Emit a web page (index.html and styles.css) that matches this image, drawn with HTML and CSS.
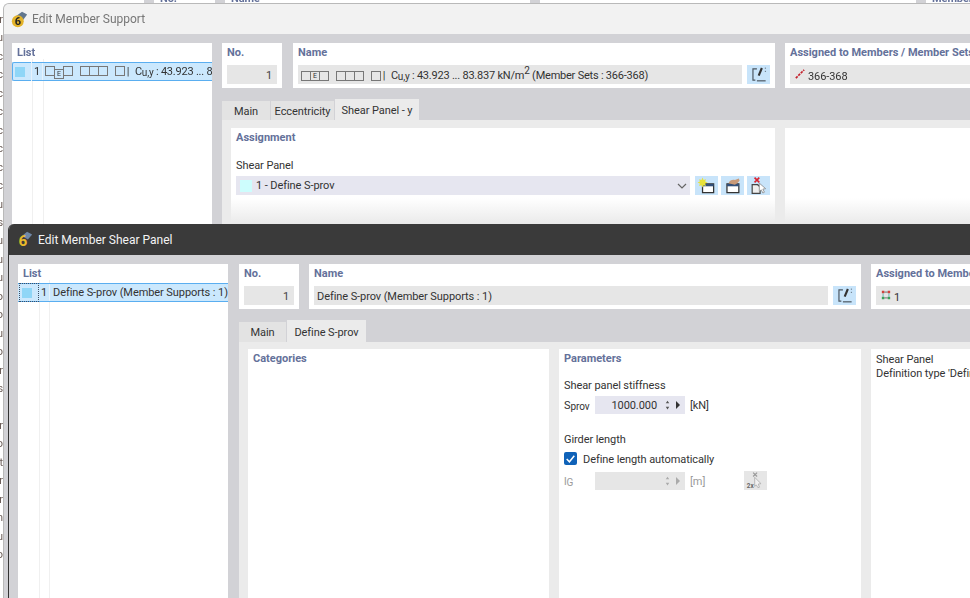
FILE: index.html
```html
<!DOCTYPE html>
<html lang="en">
<head>
<meta charset="utf-8">
<title>Edit Member Shear Panel</title>
<link rel="stylesheet" href="styles.css">
</head>
<body>
<div class="desk">
  <div class="desk-top">
    <span class="frag f1">No.</span><span class="frag f2">Name</span><span class="frag f3"></span><span class="frag f4">Member</span>
  </div>
  <div class="desk-side">r<br>u<br>c<br>c<br>c<br>c<br>c<br>c<br>c<br>c<br>u<br>s<br>u<br>u<br>u<br>o<br>o<br>u<br>o<br>r<br>s<br><br>r<br>o<br>t<br>r<br>r<br>n<br>u<br>o</div>
</div>

<section class="win win-back">
  <header class="title title-light">
    <svg class="logo" viewBox="0 0 20 20"><path d="M6 6 13 1l6 3-5 7z" fill="#62778e"/><circle cx="8" cy="12" r="7" fill="#e3b32a"/><text x="8" y="17" class="logo-t">6</text></svg>
    <span>Edit Member Support</span>
  </header>
  <div class="body body-back">
    <aside class="panel list list-back">
      <h3>List</h3>
      <div class="row">
        <span class="swcell"><i class="swatch"></i></span><span class="idx">1</span>
        <span class="row-t"><i class="g"></i><i class="g e">E</i><i class="g"></i><i class="sp"></i><i class="g"></i><i class="g"></i><i class="g"></i><i class="sp"></i><i class="g"></i> | <span class="tight">C<sub>u,y</sub> : 43.923 ... 83.837 kN/m<sup>2</sup></span></span>
      </div>
      <b class="rule r1"></b><b class="rule r2"></b>
    </aside>
    <div class="main">
      <div class="head head-back">
        <div class="panel no"><h3>No.</h3><div class="field num">1</div></div>
        <div class="panel name name-back">
          <h3>Name</h3>
          <div class="field-row">
            <div class="field grow"><i class="g"></i><i class="g e">E</i><i class="g"></i><i class="sp"></i><i class="g"></i><i class="g"></i><i class="g"></i><i class="sp"></i><i class="g"></i>&nbsp;| <span class="tight">C<sub>u,y</sub> : 43.923 ... 83.837 kN/m<sup>2</sup> (Member Sets : 366-368)</span></div>
            <button class="ib"><svg viewBox="0 0 24 24"><use href="#edit"/></svg></button>
          </div>
        </div>
        <div class="panel assigned">
          <h3>Assigned to Members / Member Sets</h3>
          <div class="field"><svg class="mi" viewBox="0 0 12 12"><path d="M1 11 11 1" stroke="#c4202c" stroke-width="2" stroke-dasharray="3 1.200"/></svg><span class="down">366-368</span></div>
        </div>
      </div>
      <nav class="tabs tabs-back">
        <span class="tab t-main">Main</span><span class="tab t-ecc">Eccentricity</span><span class="tab on t-shear">Shear Panel - y</span>
      </nav>
      <div class="content content-back">
        <div class="panel assign">
          <h3>Assignment</h3>
          <p class="lbl">Shear Panel</p>
          <div class="field-row gap2">
            <div class="combo"><i class="cs"></i><span class="ct">1 - Define S-prov</span><svg class="chev" viewBox="0 0 10 6"><path d="M1 1l4 4 4-4" fill="none" stroke="#666" stroke-width="1.200"/></svg></div>
            <button class="ib"><svg viewBox="0 0 24 24"><path d="M7 10h14v11H7z" fill="#fff" stroke="#333" stroke-width="1.600"/><path d="M7 10h14v3H7z" fill="#33507a"/><path d="M7 2l1.300 3 3-1-1 3 3 1.300-3 1.300 1 3-3-1L7 14.500 5.700 11.600l-3 1 1-3-3-1.300 3-1.300-1-3 3 1z" fill="#e8e23a"/></svg></button>
            <button class="ib"><svg viewBox="0 0 24 24"><path d="M5 10h15v11H5z" fill="#fff" stroke="#333" stroke-width="1.600"/><path d="M5 10h15v3H5z" fill="#33507a"/><path d="M7 9c1-4 6-5 8-4l5-2 1 3-3 3-3 2z" fill="#c99a78"/></svg></button>
            <button class="ib"><svg viewBox="0 0 24 24"><path d="M4 11h7l3 3v8H4z" fill="#eee" stroke="#444" stroke-width="1.500"/><path d="M13 9l8 7-3.500.5 2 4-2 1-2-4-2.500 2z" fill="#fff" stroke="#888"/><path d="M7 2l6 6M13 2 7 8" stroke="#d8222f" stroke-width="2"/></svg></button>
          </div>
        </div>
        <div class="panel side"></div>
      </div>
    </div>
  </div>
</section>

<section class="win win-front">
  <header class="title title-dark">
    <svg class="logo" viewBox="0 0 20 20"><path d="M7 6 13 1l6 3-5 6z" fill="#6f88a8"/><text x="8" y="18" class="logo-t logo-y">6</text></svg>
    <span>Edit Member Shear Panel</span>
  </header>
  <div class="body body-front">
    <aside class="panel list list-front">
      <h3>List</h3>
      <div class="row"><span class="swcell focus"><i class="swatch"></i></span><span class="idx">1</span><span class="row-t">Define S-prov (Member Supports : 1)</span></div>
      <b class="rule r1"></b><b class="rule r2"></b>
    </aside>
    <div class="main">
      <div class="head">
        <div class="panel no"><h3>No.</h3><div class="field num">1</div></div>
        <div class="panel name name-front">
          <h3>Name</h3>
          <div class="field-row">
            <div class="field grow">Define S-prov (Member Supports : 1)</div>
            <button class="ib"><svg viewBox="0 0 24 24"><use href="#edit"/></svg></button>
          </div>
        </div>
        <div class="panel assigned">
          <h3>Assigned to Members / Member Sets</h3>
          <div class="field"><svg class="mi" viewBox="0 0 12 12"><path d="M1 1h3v3H1zM8 1h3v3H8z" fill="#d2423c"/><path d="M1 8h3v3H1zM8 8h3v3H8z" fill="#3aa35a"/><path d="M4 2.500h4M4 9.500h4" stroke="#555"/><path d="M2.500 4v4M9.500 4v4" stroke="#5aa"/></svg><span class="down">1</span></div>
        </div>
      </div>
      <nav class="tabs">
        <span class="tab t-main">Main</span><span class="tab on t-def">Define S-prov</span>
      </nav>
      <div class="content">
        <div class="panel cat"><h3>Categories</h3></div>
        <div class="panel par">
          <h3>Parameters</h3>
          <p class="lbl l-first">Shear panel stiffness</p>
          <div class="spin-row">
            <span class="sym">S<sub>prov</sub></span>
            <div class="spin"><span>1000.000</span><svg viewBox="0 0 8 10" class="ud"><path d="M4 0 6 3H2zM4 10 2 7h4z" fill="#555"/></svg><svg viewBox="0 0 6 8" class="ar"><path d="M1 0l4 4-4 4z" fill="#333"/></svg></div>
            <span class="unit">[kN]</span>
          </div>
          <p class="lbl l-second">Girder length</p>
          <label class="check"><i class="box"><svg viewBox="0 0 12 12"><path d="M2.500 6.500 5 9l4.500-5.500" fill="none" stroke="#fff" stroke-width="1.400"/></svg></i><span class="check-t">Define length automatically</span></label>
          <div class="spin-row off">
            <span class="sym">l<sub>G</sub></span>
            <div class="spin"><svg viewBox="0 0 8 10" class="ud"><path d="M4 0 6 3H2zM4 10 2 7h4z" fill="#aaa"/></svg><svg viewBox="0 0 6 8" class="ar"><path d="M1 0l4 4-4 4z" fill="#aaa"/></svg></div>
            <span class="unit">[m]</span>
            <button class="ib ib-off"><svg viewBox="0 0 24 24"><path d="M9 2l5 5M14 2 9 7" stroke="#999" stroke-width="1.500"/><path d="M11 8l8 8-3.500.5 1.500 4-2 .5-2-3.500-2 2z" fill="#f2f2f2" stroke="#aaa"/><text x="1" y="22" class="tiny">2x</text></svg></button>
          </div>
        </div>
        <div class="panel info">Shear Panel<br>Definition type 'Definition by S-prov'</div>
      </div>
    </div>
  </div>
</section>

<svg class="defs" width="0" height="0"><defs><g id="edit"><path d="M10 5H5v14h3" fill="none" stroke="#4a5560" stroke-width="1.500"/><path d="M15 3l2.500 1.500-4 9.500-2.500-1.200z" fill="#333"/><path d="M10 20h11" stroke="#4a5560" stroke-width="1.500"/><path d="M20 4h1.500M20 8h1.500" stroke="#4a5560"/></g></defs></svg>
</body>
</html>
```
FILE: styles.css
```css
* { box-sizing: border-box; }
html, body { margin: 0; height: 100%; }
body {
  width: 970px; height: 598px; overflow: hidden; position: relative; background: #fff;
  font: 11px/14px Roboto, "Noto Sans", sans-serif; letter-spacing: -.08px; color: #333; filter: blur(.3px);
}
i, b { font-style: normal; font-weight: normal; }
h3 { margin: 0; font-size: 11px; line-height: 14px; font-weight: 700; color: #64719a; letter-spacing: 0; }
p { margin: 0; }
sup { font-size: 10px; line-height: 0; }
sub { font-size: 10px; line-height: 0; vertical-align: -1px; }
.tight { letter-spacing: -.22px; margin-left: 3px; }

.desk { position: absolute; inset: 0; }
.desk-top { position: absolute; left: 0; right: 0; top: 0; height: 4px; overflow: hidden; }
.frag { position: absolute; top: -8px; font-weight: 700; color: #64719a; padding-left: 6px; }
.frag::before { content: ""; position: absolute; left: -10px; top: 0; width: 10px; height: 14px; background: #d2d2d6; }
.f1 { left: 154px; } .f2 { left: 225px; } .f3 { left: 540px; } .f4 { left: 926px; }
.desk-side { position: absolute; left: -5px; top: 11px; width: 8px; text-align: right; line-height: 18.45px; font-size: 11px; color: #6b5d58; overflow: hidden; height: 587px; }

.win { position: absolute; display: flex; flex-direction: column; overflow: hidden; background: #d2d2d6; border-radius: 6px 0 0 0; }
.win-back { left: 3px; top: 3px; width: 967px; height: 595px; border: 1px solid #b9b9b9; border-right: 0; border-bottom: 0; }
.win-front { left: 8px; top: 224px; width: 962px; height: 374px; border-left: 1px solid #333; }

.title { height: 31px; flex: none; display: flex; align-items: center; gap: 4px; padding-left: 7px; font-size: 12px; letter-spacing: 0; }
.title span { position: relative; }
.title-dark span { left: 1px; }
.win-back .title { height: 30px; }
.title-light { background: #f2f2f2; color: #777; }
.title-dark { background: #3a3a3a; color: #f4f4f4; }
.logo { width: 17px; height: 17px; flex: none; }
.logo-t { font: 700 13px Roboto, sans-serif; fill: #222; text-anchor: middle; }
.logo-y { font-size: 18px; fill: #e8bb2a; }

.body { flex: 1; display: flex; padding: 9px 0 0 9px; min-height: 0; }
.body-back { gap: 10px; padding-left: 8px; }
.body-front { gap: 11px; }
.panel { background: #fff; padding: 3px 5px 2px; }
.list { position: relative; flex: none; padding: 3px 0 0; overflow: hidden; }
.list h3 { padding: 0 5px; }
.list-back { width: 200px; }
.list-front { width: 210px; }
.row { position: relative; z-index: 1; height: 19px; margin-top: 2px; display: flex; align-items: center; white-space: nowrap; background: #cbe8fd; border: 1px solid #5aaef0; border-width: 1px 0; color: #333; }
.list-back .row { border-width: 1px 0 1px 1px; border-radius: 2px 0 0 2px; }
.swcell { flex: none; width: 20px; height: 19px; margin-top: -1px; margin-bottom: -1px; display: flex; align-items: center; padding-left: 2px; border-right: 1px solid #e6f2fc; }
.list-back .swcell { width: 19px; }
.swcell.focus { border: 1px dotted #3d4f66; padding-left: 2px; margin-left: 1px; }
.swatch { width: 10px; height: 10px; background: #8fd6f7; }
.idx { flex: none; width: 11px; text-align: right; padding-right: 2px; height: 100%; line-height: 17px; border-right: 1px solid #e6f2fc; }
.row-t { padding-left: 2px; }
.list-front .row-t { padding-left: 3px; }
.rule { position: absolute; top: 16px; bottom: 0; width: 1px; background: #f0f0f0; }
.rule.r1 { left: 20px; } .rule.r2 { left: 31px; }
.list-front .rule.r1 { left: 21px; }

.g { display: inline-block; width: 10px; height: 10px; border: 1px solid #777; margin-right: -1px; font-size: 7px; line-height: 8px; text-align: center; vertical-align: -1px; }
.sp { display: inline-block; width: 8px; }

.main { flex: 1; min-width: 0; display: flex; flex-direction: column; }
.head { display: flex; height: 45px; flex: none; gap: 10px; }
.no { width: 60px; flex: none; }
.field { height: 19px; background: #e6e6e6; padding: 2px 3px 0; display: flex; align-items: center; white-space: pre; margin-top: 5px; overflow: hidden; }
.num { justify-content: flex-end; color: #444; padding-right: 5px; }
.field-row { display: flex; gap: 5px; }
.grow { flex: 1; min-width: 0; }
.name { flex: none; }
.name-back { width: 482px; margin-left: 1px; }
.name-front { width: 552px; }
.assigned { flex: none; width: 260px; white-space: nowrap; }
.assigned .field { padding-left: 5px; }
.mi { width: 10px; height: 10px; flex: none; margin-right: 3px; margin-top: -4px; }
.down { padding-top: 2px; }
.ib { width: 23px; height: 19px; padding: 0; border: 0; margin-top: 5px; background: #c8e4fa; display: flex; align-items: center; justify-content: center; flex: none; }
.ib svg { width: 19px; height: 19px; }
.ib-off { background: #e6e6e6; margin-top: 0; margin-left: 24px; }

.tabs { height: 22px; margin-top: 11px; display: flex; align-items: flex-end; flex: none; }
.tab { display: flex; align-items: center; justify-content: center; height: 20px; padding-top: 2px; background: #e3e3e3; border-right: 1px solid #d2d2d6; }
.tab.on { height: 100%; background: #ebebeb; border-right: 0; padding-top: 3px; }
.t-main { width: 48px; }
.t-def { width: 79px; }
.tabs-back { height: 21px; }
.tabs-back .tab { height: 19px; }
.tabs-back .tab.on { height: 21px; }
.tabs-back .t-main { width: 49px; }
.t-ecc { width: 64px; }
.t-shear { width: 84px; }
.content { flex: 1; min-height: 0; background: #ebebeb; display: flex; gap: 10px; padding: 7px 0 0 9px; }
.content-back { padding-top: 8px; }
.assign { width: 544px; flex: none; background: linear-gradient(#fff 70px, #e9e9e9 97px); }
.side { flex: 1; background: linear-gradient(#fff 70px, #e9e9e9 97px); }
.lbl { margin-top: 14px; }
.gap2 { margin-top: 3px; gap: 3px; }
.gap2 .ib { margin-top: 0; width: 23px; }
.combo { flex: 1; height: 19px; background: #e6e6f0; display: flex; align-items: center; padding: 0 3px 0 4px; margin-right: 2px; }
.ct { padding-top: 1px; }
.cs { width: 12px; height: 12px; background: #cdfdfd; margin-right: 4px; }
.chev { width: 10px; height: 6px; margin-left: auto; }
.cat { width: 301px; flex: none; }
.par { width: 302px; flex: none; }
.info { flex: 1; white-space: nowrap; padding-top: 4px; }
.l-first { margin-top: 13px; }
.l-second { margin-top: 19px; }
.spin-row { display: flex; align-items: center; gap: 6px; height: 18px; margin-top: 3px; }
.sym { width: 25px; flex: none; padding-top: 2px; }
.spin { width: 90px; height: 18px; background: #e6e6f0; display: flex; align-items: center; justify-content: flex-end; flex: none; }
.spin span { margin-right: 7px; padding-top: 2px; }
.ud { width: 7px; height: 10px; }
.ar { width: 6px; height: 8px; margin: 0 4px; }
.unit { width: 24px; flex: none; margin-left: -1px; padding-top: 2px; }
.check { display: flex; align-items: center; gap: 6px; height: 18px; margin-top: 2px; }
.check-t { padding-top: 4px; }
.box { width: 13px; height: 13px; background: #0f62b8; border-radius: 2px; display: flex; }
.off { color: #9a9a9a; margin-top: 4px; height: 19px; }
.off .spin { background: #e6e6e6; height: 18px; }
.tiny { font: 700 8px Roboto, sans-serif; fill: #666; }
.defs { position: absolute; }
```
